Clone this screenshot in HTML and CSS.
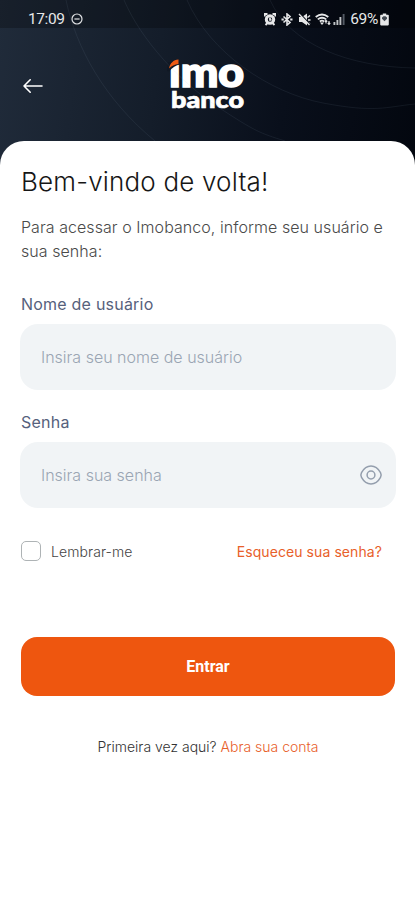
FILE: index.html
```
<!DOCTYPE html>
<html lang="pt-BR">
<head>
    <meta charset="utf-8">
    <meta name="viewport" content="width=device-width, initial-scale=1">
    <title>Imobanco</title>
    <link rel="stylesheet" href="styles.css">
</head>
<body>
    <header class="header">
        <svg class="waves" width="415" height="165" viewBox="0 0 415 165">
            <path d="M66 0C76 48 105 100 155 141"/>
            <path d="M124 0C141 40 180 82 218 107S260 133 285 141"/>
            <path d="M187 0C210 53 270 93 323 103S385 107 415 104"/>
            <path d="M270 0C290 45 350 67 415 68"/>
        </svg>
        <div class="status-bar">
            <div class="status-left">
                <span class="time">17:09</span>
                <svg width="12" height="12" viewBox="0 0 12 12" fill="none" stroke="#dfe1e3" stroke-width="1.2">
                    <circle cx="6" cy="6" r="5"/>
                    <path d="M3.4 6h5.2"/>
                </svg>
            </div>
            <div class="status-right">
                <!-- alarme -->
                <svg width="12" height="13" viewBox="0 0 12 13" fill="none" stroke="#e6e7e8">
                    <circle cx="6" cy="6.500" r="3.700" stroke-width="3"/>
                    <path d="M.8 3.500V1H3.500M8.500 1h2.700v2.500M1.500 12l2-2M10.500 12l-2-2M6 4.500v2.300h1.500" stroke-width="1.800"/>
                </svg>
                <!-- bluetooth -->
                <svg class="bt" width="12" height="13" viewBox="0 0 12 13" fill="none" stroke="#e6e7e8" stroke-width="1.600">
                    <path d="M2.500 3.500l6.500 6L6 12V1l3 2.500-6.500 6"/>
                    <path d="M.5 6.500h2.300M9.200 6.500h2.300" stroke-width="2"/>
                </svg>
                <!-- sem som -->
                <svg class="mute" width="13" height="13" viewBox="0 0 13 13">
                    <path d="M1 4h3l5-3.500v12L4 9H1z" fill="#e6e7e8"/>
                    <path d="M9.500 4.500l2.500-2M10 7h2.500M9.500 9l2.500 2" stroke="#e6e7e8" stroke-width="1.500"/>
                    <path d="M2.500 1l10 11" stroke="#080e18" stroke-width="1.200"/>
                    <path d="M1 1l10.500 11" stroke="#e6e7e8" stroke-width="1.300"/>
                </svg>
                <!-- wifi -->
                <svg class="wifi" width="16" height="13" viewBox="0 0 16 13" fill="none" stroke="#e6e7e8">
                    <path d="M.7 4Q7 -1 13.300 4M2.800 6.400Q7 3 11.200 6.400M4.800 8.500Q7 6.900 9.200 8.500" stroke-width="1.800"/>
                    <path d="M5 9.400h4L7 12z" fill="#e6e7e8" stroke="none"/>
                    <path d="M11 10.500V7.500M9.800 8.700L11 7.400l1.200 1.300M14 8v3M12.800 10l1.200 1.300 1.200-1.300" stroke-width="1.200"/>
                </svg>
                <!-- sinal -->
                <svg class="signal" width="12" height="12" viewBox="0 0 12 12" stroke-width="1.900">
                    <path d="M1.400 12V9M4.400 12V7M7.400 12V4" stroke="#bfc2c5"/>
                    <path d="M10.600 12V1" stroke="#555b64"/>
                </svg>
                <span class="battery">69%</span>
                <svg class="battery-icon" width="9" height="13" viewBox="0 0 9 13">
                    <path d="M2.800 1.800V.6h3.400v1.200H8q.8 0 .8.8v9q0 .8-.8.8H1q-.8 0-.8-.8v-9q0-.8.8-.8z" fill="#e6e7e8"/>
                    <path d="M2 4.600l1.500-1.300h2L7 4.600v1.200L4.500 8.300 2 5.800z" fill="#444b54"/>
                </svg>
            </div>
        </div>
        <div class="top">
            <a class="back" href="#" aria-label="Voltar">
                <svg width="22" height="18" viewBox="0 0 22 18" fill="none" stroke="#fff" stroke-width="1.600" stroke-linecap="round" stroke-linejoin="round">
                    <path d="M20 9H2M8.200 2.800L2 9l6.200 6.200"/>
                </svg>
            </a>
            <svg class="logo" width="80" height="74" viewBox="0 -10 80 74">
                <text class="logo-imo" x="1" y="27.500" textLength="75" lengthAdjust="spacingAndGlyphs">ımo</text>
                <!-- chama sobre o i -->
                <path d="M-1 12L0 3h12v2.500Q6 6.500 1 12.500z" fill="#101824"/>
                <path d="M1 9.500C2.200 4 5.200 1 10.500.5V5Q4.800 5.500 1 9.500z" fill="#ee5a12"/>
                <text class="logo-banco" x="3" y="49" textLength="73" lengthAdjust="spacingAndGlyphs">banco</text>
            </svg>
        </div>
    </header>

    <main class="card">
        <h1>Bem-vindo de volta!</h1>
        <p class="intro">Para acessar o Imobanco, informe seu usuário e<br>sua senha:</p>

        <form>
            <label class="label" for="usuario">Nome de usuário</label>
            <div class="field">
                <input type="text" id="usuario" placeholder="Insira seu nome de usuário">
            </div>

            <label class="label" for="senha">Senha</label>
            <div class="field">
                <input type="password" id="senha" placeholder="Insira sua senha">
                <svg width="24" height="22" viewBox="0 0 24 22" fill="none" stroke="#949ead" stroke-width="1.500">
                    <path d="M2.500 8.600C4.800 4.500 8 2 12 2s7.200 2.500 9.500 6.600q1.300 2.400 0 4.800C19.200 17.500 16 20 12 20s-7.200-2.500-9.500-6.600q-1.300-2.400 0-4.800z"/>
                    <circle cx="12" cy="11" r="3.900"/>
                </svg>
            </div>

            <div class="options">
                <label class="remember"><input type="checkbox">Lembrar-me</label>
                <a class="forgot" href="#">Esqueceu sua senha?</a>
            </div>

            <button class="submit" type="submit">Entrar</button>
        </form>

        <p class="signup">Primeira vez aqui? <a href="#">Abra sua conta</a></p>
    </main>
</body>
</html>
```
FILE: styles.css
```
* {
    box-sizing: border-box;
}
body {
    margin: 0;
    height: 900px;
    overflow: hidden;
    font-family: Inter, "Liberation Sans", sans-serif;
    background: #fff;
}
a {
    color: #e8602a;
    text-decoration: none;
}
.header {
    position: relative;
    height: 165px;
    background: linear-gradient(97deg, #202b3a 0%, #141d2a 38%, #090f1b 68%, #03070f 100%);
}
/* linhas decorativas do fundo */
.waves {
    position: absolute;
    top: 0;
    left: 0;
    fill: none;
    stroke: rgba(150, 175, 195, 0.09);
}
.status-bar {
    display: flex;
    justify-content: space-between;
    align-items: center;
    height: 28px;
    padding: 10px 26px 0 28px;
    background: rgba(0, 0, 0, 0.25);
    font-family: Roboto, sans-serif;
    font-size: 15.5px;
    color: #e6e7e8;
}
.status-left, .status-right {
    display: flex;
    align-items: center;
}
.time {
    width: 37px;
    margin-right: 6px;
    letter-spacing: -0.4px;
}
.bt {
    margin-left: 5px;
}
.mute {
    margin-left: 5px;
}
.wifi {
    margin-left: 4px;
}
.signal {
    margin-left: 2px;
}
.battery {
    margin-left: 5px;
    letter-spacing: -0.3px;
}
.battery-icon {
    margin-left: 2px;
}
.top {
    display: grid;
    grid-template-columns: 1fr 80px 1fr;
    align-items: center;
    height: 113px;
    padding: 0 22px;
}
.back {
    height: 18px;
    margin-top: 2px;
}
.logo {
    margin-top: 3px;
    overflow: visible;
    fill: #fff;
    font-family: Lato, sans-serif;
    font-weight: 900;
}
.logo-imo {
    font-size: 41px;
    stroke: #fff;
    stroke-width: 1.7px;
}
.logo-banco {
    font-size: 23px;
    stroke: #fff;
    stroke-width: 0.7px;
}
.card {
    position: relative;
    height: 759px;
    margin-top: -24px;
    padding: 25px 19px 0 20px;
    background: #fff;
    border-radius: 24px 24px 0 0;
}
h1 {
    margin: 0 0 0 1px;
    font-size: 26px;
    font-weight: 300;
    letter-spacing: 0.18px;
    line-height: 32px;
    color: #161616;
}
.intro {
    margin: 17px 0 0 1px;
    font-size: 16px;
    font-weight: 300;
    letter-spacing: 0.06px;
    line-height: 24px;
    color: #4a4a4a;
    white-space: nowrap;
}
form {
    margin-top: 31px;
}
.label {
    display: block;
    margin: 0 0 10px 1px;
    font-size: 16px;
    letter-spacing: 0.22px;
    line-height: 20px;
    color: #56617c;
}
.field {
    display: flex;
    align-items: center;
    height: 66px;
    margin-bottom: 22px;
    padding: 0 13px 0 21px;
    background: #f1f4f6;
    border-radius: 18px;
}
.field input {
    flex: 1;
    min-width: 0;
    padding: 0;
    border: none;
    outline: none;
    background: none;
    font: 300 16px Inter, sans-serif;
    color: #333;
}
.field input::placeholder {
    color: #9aa5b3;
}
.options {
    display: flex;
    justify-content: space-between;
    align-items: center;
    height: 20px;
    margin-top: 33px;
    padding: 0 14px 0 1px;
    font-size: 14px;
}
.remember {
    display: flex;
    align-items: center;
    font-weight: 300;
    letter-spacing: 0.1px;
    color: #444;
}
.remember input {
    appearance: none;
    width: 20px;
    height: 20px;
    margin: 0 10px 0 0;
    border: 1px solid #aeb3b5;
    border-radius: 5px;
}
.forgot {
    letter-spacing: 0.08px;
}
.submit {
    display: block;
    width: 374px;
    height: 59px;
    margin: 76px 0 0 1px;
    border: none;
    border-radius: 16px;
    background: #ee560f;
    font: 700 16px Roboto, sans-serif;
    color: #fff;
}
.signup {
    margin: 41px 0 0;
    font-size: 14px;
    font-weight: 300;
    line-height: 20px;
    text-align: center;
    color: #333;
}
```
